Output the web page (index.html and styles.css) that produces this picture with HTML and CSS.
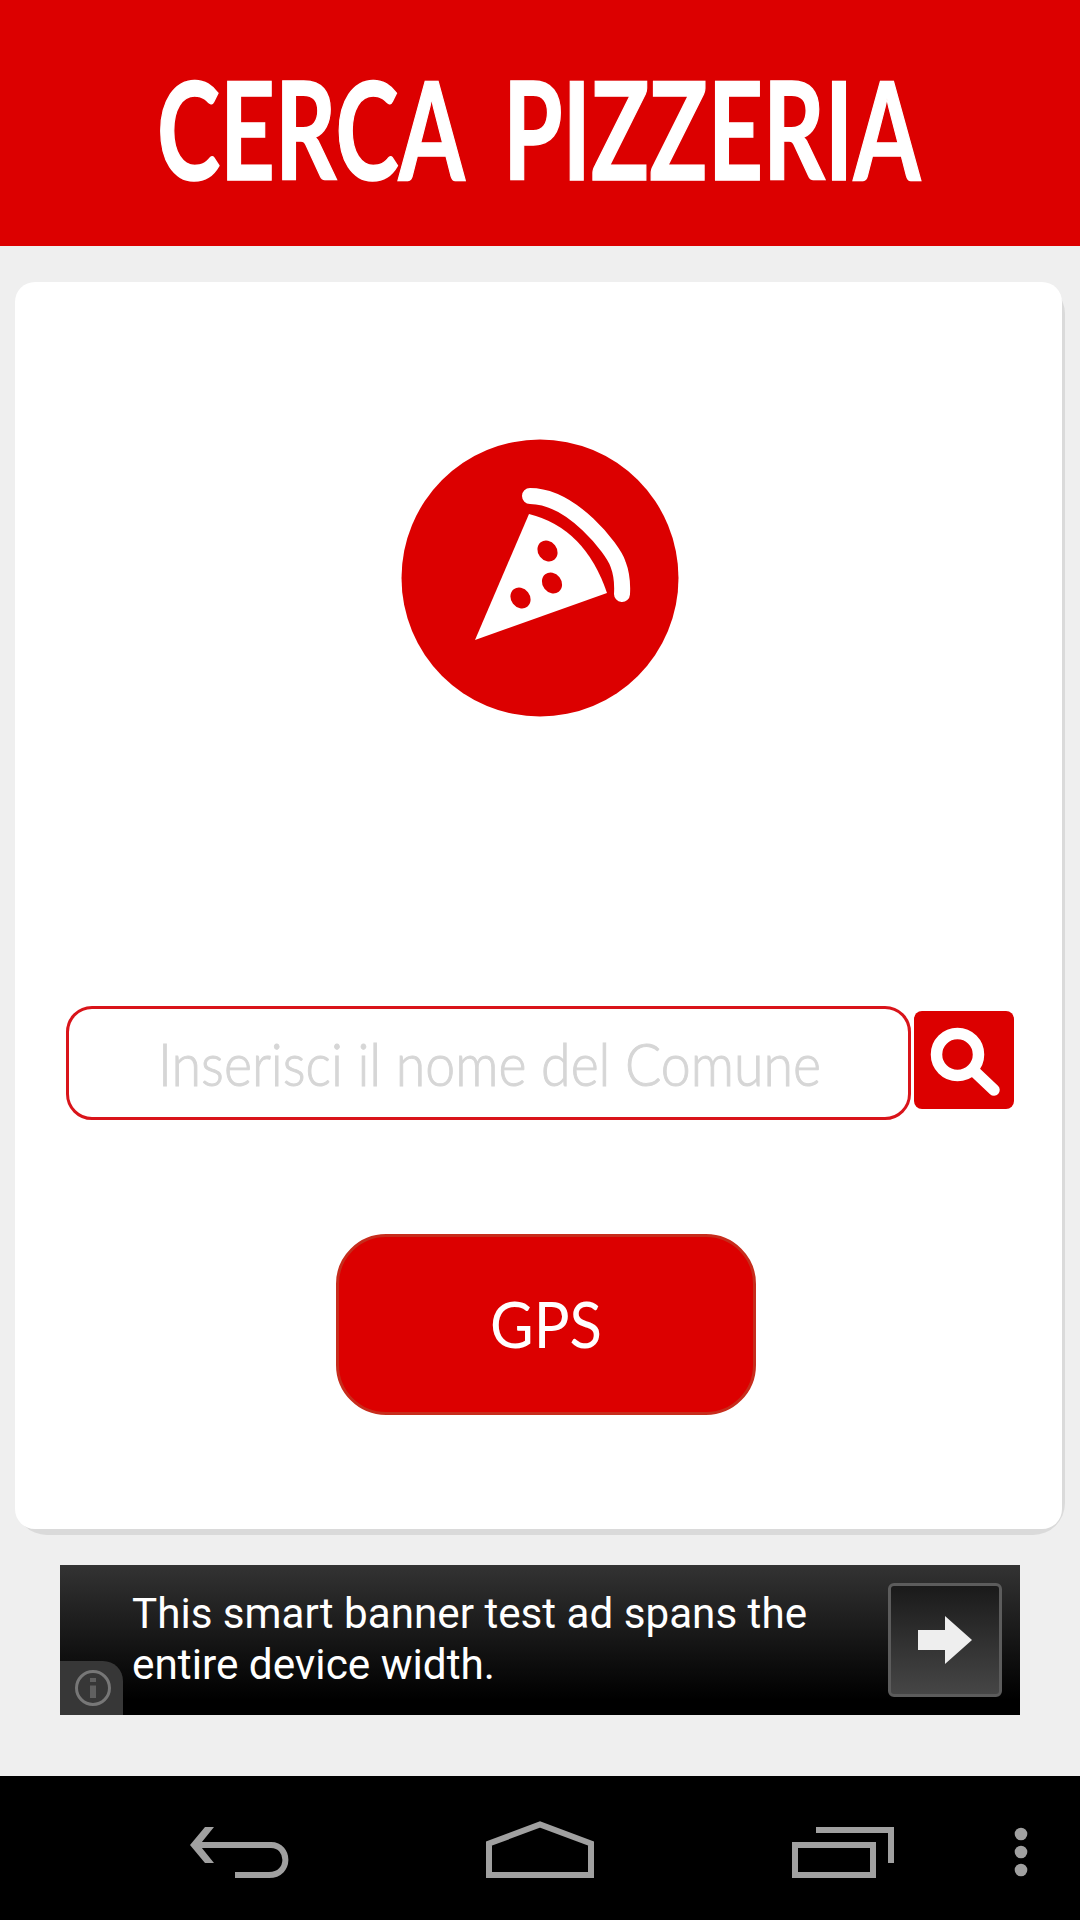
FILE: index.html
```
<!DOCTYPE html>
<html lang="it">
<head>
  <meta charset="UTF-8">
  <title>Cerca Pizzeria</title>
  <link rel="stylesheet" href="styles.css">
</head>
<body>

  <header>
    <h1>
      <svg class="title" viewBox="0 0 1080 246">
        <text transform="translate(157 180) scale(.76 1)" textLength="405" lengthAdjust="spacingAndGlyphs">CERCA</text>
        <text transform="translate(503 180) scale(.76 1)" textLength="549" lengthAdjust="spacingAndGlyphs">PIZZERIA</text>
      </svg>
    </h1>
  </header>

  <div class="card-shadow">
    <main class="card">
      <svg class="logo" viewBox="0 0 278 278">
        <circle class="red" cx="139" cy="139" r="138.5"/>
        <path class="white" d="M128 75 Q184 89 206 154 L74 201 Z"/>
        <path class="crust" d="M129 57 C171 57 212 110 217 125 Q222 138 221 155"/>
        <ellipse class="red" cx="146.500" cy="112" rx="9.500" ry="11" transform="rotate(-38 146.500 112)"/>
        <ellipse class="red" cx="151" cy="144" rx="9.500" ry="11" transform="rotate(-38 151 144)"/>
        <ellipse class="red" cx="119.500" cy="159" rx="9.500" ry="11" transform="rotate(-38 119.500 159)"/>
      </svg>

      <div class="search">
        <div class="search-input">
          <svg viewBox="0 0 839 108">
            <text x="89" y="77" textLength="663" lengthAdjust="spacingAndGlyphs">Inserisci il nome del Comune</text>
          </svg>
        </div>
        <button class="search-btn" aria-label="Cerca">
          <svg viewBox="0 0 100 98">
            <circle cx="43.500" cy="43.500" r="21"/>
            <path d="M61 61 L80 79"/>
          </svg>
        </button>
      </div>

      <button class="gps-btn">
        <svg viewBox="0 0 414 175">
          <text x="151" y="111" textLength="112" lengthAdjust="spacingAndGlyphs">GPS</text>
        </svg>
      </button>
    </main>
  </div>

  <div class="banner">
    <div class="info">
      <svg viewBox="0 0 36 36">
        <circle cx="18" cy="18" r="16.500"/>
        <path d="M18 8 V12 M18 15.500 V28"/>
      </svg>
    </div>
    <svg class="banner-text" viewBox="0 0 755 150">
      <text x="0" y="63" textLength="675" lengthAdjust="spacingAndGlyphs">This smart banner test ad spans the</text>
      <text x="0" y="114" textLength="363" lengthAdjust="spacingAndGlyphs">entire device width.</text>
    </svg>
    <div class="banner-btn">
      <svg viewBox="0 0 54 48"><path d="M0 14 H27 V0 L54 24 L27 48 V34 H0 Z"/></svg>
    </div>
  </div>

  <nav>
    <svg class="back" viewBox="0 0 99 52">
      <path class="fill" d="M0 18 L15 0 H24 L9.500 18 L24 36 H15 Z"/>
      <path d="M9 18 H81 C100 18 101 48 79 48 H45"/>
    </svg>
    <svg class="home" viewBox="0 0 108 57">
      <path d="M3 22.500 L54 3.500 L105 22.500 V54 H3 Z"/>
    </svg>
    <svg class="recent" viewBox="0 0 102 51">
      <path d="M3 18 H81 V48 H3 Z M24 3 H99 V36"/>
    </svg>
    <svg class="more" viewBox="0 0 14 50">
      <circle class="fill" cx="7" cy="7" r="6.300"/>
      <circle class="fill" cx="7" cy="25" r="6.300"/>
      <circle class="fill" cx="7" cy="43" r="6.300"/>
    </svg>
  </nav>

</body>
</html>
```
FILE: styles.css
```
* {
    box-sizing: border-box;
}

body {
    margin: 0;
    width: 1080px;
    height: 1920px;
    display: flex;
    flex-direction: column;
    background-color: #efefef;
    font-family: Lato, "Open Sans", sans-serif;
    overflow: hidden;
}

svg {
    display: block;
}

button {
    padding: 0;
    border: none;
    font-family: inherit;
}

header {
    height: 246px;
    background-color: #dc0000;
}

h1 {
    margin: 0;
}

.title {
    width: 1080px;
    height: 246px;
    fill: #fff;
    stroke: #fff;
    stroke-width: 1.5px;
    font-size: 136px;
    font-weight: 700;
}

.card-shadow {
    margin: 36px 15px 0;
    padding: 0 3px 6px 0;
    background-color: #dadada;
    border-radius: 32px;
}

.card {
    height: 1247px;
    padding: 157px 48px 0 51px;
    display: flex;
    flex-direction: column;
    background-color: #fff;
    border-radius: 20px;
}

.logo {
    width: 278px;
    height: 278px;
    margin-left: 335px;
}

.red {
    fill: #dc0000;
}

.white {
    fill: #fff;
}

.crust {
    fill: none;
    stroke: #fff;
    stroke-width: 16px;
    stroke-linecap: round;
}

.search {
    display: flex;
    align-items: flex-start;
    gap: 3px;
    margin-top: 289px;
}

.search-input {
    width: 845px;
    height: 114px;
    border: 3px solid #d9141a;
    border-radius: 26px;
}

.search-input svg {
    width: 839px;
    height: 108px;
    fill: #d6d6d6;
    stroke: #d6d6d6;
    stroke-width: 1px;
    font-size: 60px;
    font-weight: 300;
}

.search-btn {
    width: 100px;
    height: 98px;
    margin-top: 5px;
    background-color: #dc0000;
    border-radius: 8px;
}

.search-btn svg {
    width: 100px;
    height: 98px;
    fill: none;
    stroke: #fff;
    stroke-width: 11.5px;
    stroke-linecap: round;
}

.gps-btn {
    width: 420px;
    height: 181px;
    margin: 114px 0 0 270px;
    background-color: #dc0000;
    border: 3px solid #c72c1c;
    border-radius: 50px;
}

.gps-btn svg {
    width: 414px;
    height: 175px;
    fill: #fff;
    font-size: 64px;
    font-weight: 400;
}

.banner {
    display: flex;
    width: 960px;
    height: 150px;
    margin: 30px 60px 0;
    background: linear-gradient(#333, #161616 50%, #000 90%);
}

.info {
    align-self: flex-end;
    width: 63px;
    height: 54px;
    padding: 9px 0 0 15px;
    background-color: #373737;
    border-top-right-radius: 20px;
}

.info svg {
    width: 36px;
    height: 36px;
    fill: none;
    stroke: #777;
    stroke-width: 3px;
}

.info path {
    stroke: #606060;
    stroke-width: 6px;
}

.banner-text {
    width: 755px;
    height: 150px;
    margin-left: 9px;
    fill: #fff;
    font-family: Roboto, sans-serif;
    font-size: 43px;
}

.banner-btn {
    display: flex;
    align-items: center;
    justify-content: center;
    width: 114px;
    height: 114px;
    margin: 18px 0 0 1px;
    border: 3px solid #5c5c5c;
    border-radius: 6px;
    background: linear-gradient(#1a1a1a, #464646);
}

.banner-btn svg {
    width: 54px;
    height: 48px;
    fill: #eee;
}

nav {
    display: flex;
    align-items: flex-start;
    height: 144px;
    margin-top: 61px;
    padding-top: 45px;
    background-color: #000;
}

nav svg {
    fill: none;
    stroke: #a0a0a0;
    stroke-width: 6px;
}

nav .fill {
    fill: #a0a0a0;
    stroke: none;
}

.back {
    width: 99px;
    height: 52px;
    margin: 6px 0 0 190px;
}

.home {
    width: 108px;
    height: 57px;
    margin-left: 197px;
}

.recent {
    width: 102px;
    height: 51px;
    margin: 6px 0 0 198px;
}

.more {
    width: 14px;
    height: 50px;
    margin: 6px 0 0 120px;
}
```
